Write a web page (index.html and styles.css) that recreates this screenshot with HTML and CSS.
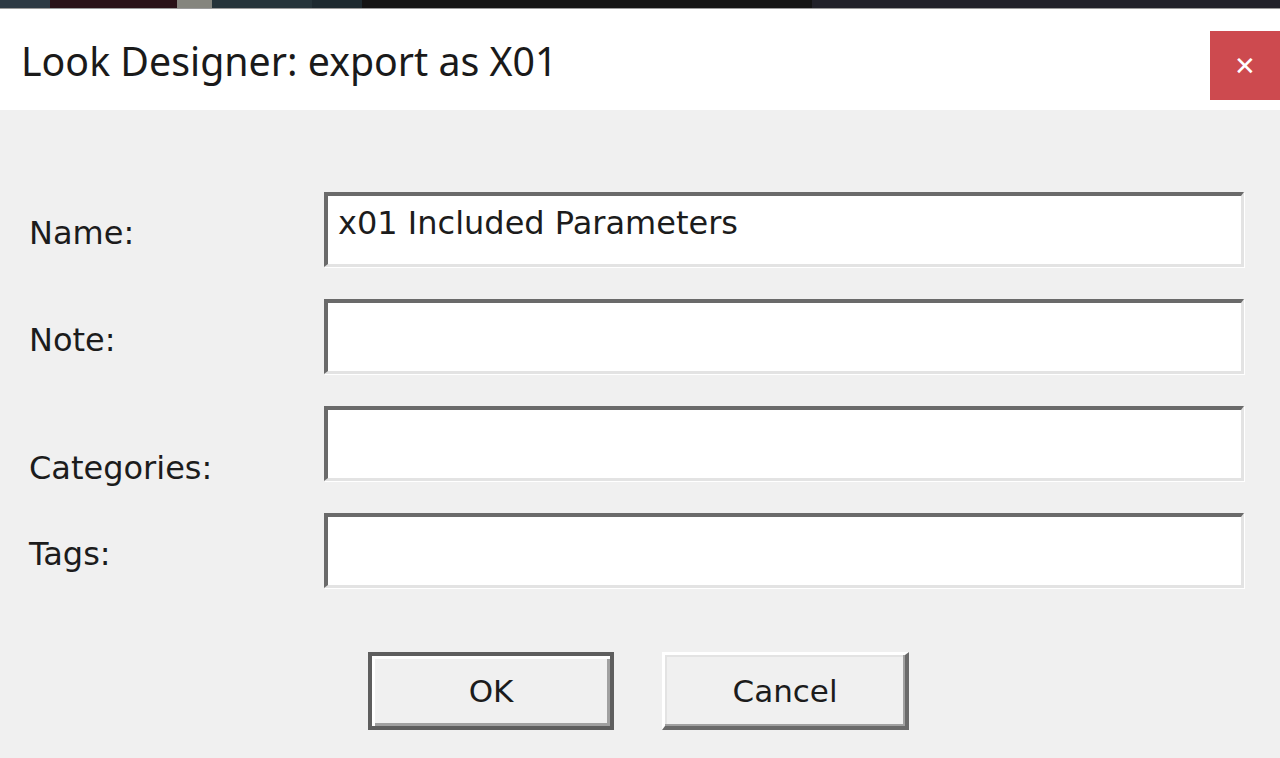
FILE: index.html
```html
<!DOCTYPE html>
<html>
<head>
<meta charset="utf-8">
<link rel="stylesheet" href="styles.css">
</head>
<body>
<div class="strip">
  <span class="seg s1"></span><span class="seg s2"></span><span class="seg s3"></span><span class="seg s4"></span><span class="seg s5"></span><span class="seg s6"></span><span class="seg s7"></span>
</div>
<div class="titlebar">
  <div class="title">Look Designer: export as X01</div>
  <div class="close">&#x2715;</div>
</div>
<div class="body">
  <div class="form">
    <div class="label">Name:</div>
    <div class="field">x01 Included Parameters</div>
    <div class="label">Note:</div>
    <div class="field"></div>
    <div class="label label-low">Categories:</div>
    <div class="field"></div>
    <div class="label">Tags:</div>
    <div class="field"></div>
  </div>
  <div class="buttons">
    <div class="btn btn-default"><span>OK</span></div>
    <div class="btn"><span>Cancel</span></div>
  </div>
</div>
</body>
</html>
```
FILE: styles.css
```css
* { box-sizing: border-box; }
html, body { margin: 0; padding: 0; }
body {
  width: 1280px;
  height: 758px;
  overflow: hidden;
  background: #f0f0f0;
  font-family: "DejaVu Sans", sans-serif;
  color: #1c1c1c;
}
.strip {
  display: flex;
  height: 9px;
  border-bottom: 1px solid #9a9a9a;
  background: #1f1f22;
}
.seg { display: block; height: 8px; }
.s1 { width: 50px; background: #2e3a44; }
.s2 { width: 127px; background: #2a1218; }
.s3 { width: 35px; background: #85857e; }
.s4 { width: 100px; background: #26343a; }
.s5 { width: 50px; background: #1e2a30; }
.s6 { width: 450px; background: #141414; }
.s7 { flex: 1; background: #22222a; }
.titlebar {
  height: 101px;
  background: #ffffff;
  display: flex;
  justify-content: space-between;
  align-items: flex-start;
}
.title {
  font-family: "Noto Sans", "Open Sans", sans-serif;
  font-size: 39.3px;
  color: #1a1a1a;
  padding-left: 21px;
  padding-top: 27px;
  line-height: 50px;
}
.close {
  margin-top: 22px;
  width: 70px;
  height: 69px;
  background: #cd4a4f;
  color: #ffffff;
  font-family: "DejaVu Sans", sans-serif;
  font-size: 26px;
  display: flex;
  align-items: center;
  justify-content: center;
}
.body {
  padding-top: 82px;
}
.form {
  display: grid;
  grid-template-columns: 324px 920px;
  row-gap: 32px;
}
.label {
  font-size: 32px;
  padding-left: 29px;
  align-self: center;
  padding-top: 6px;
}
.label-low { align-self: end; padding-top: 0; transform: translateY(6px); }
.field {
  height: 75px;
  background: #ffffff;
  border-top: 4px solid #6a6a6a;
  border-left: 4px solid #6a6a6a;
  border-right: 3px solid #e3e3e3;
  border-bottom: 3px solid #e3e3e3;
  box-shadow: 1px 1px 0 #ffffff;
  font-size: 32px;
  padding-left: 10px;
  padding-top: 7px;
  line-height: 40px;
}
.buttons {
  display: flex;
  gap: 48px;
  padding-left: 368px;
  padding-top: 64px;
}
.btn {
  width: 247px;
  height: 78px;
  background: #f0f0f0;
  border-top: 3px solid #ffffff;
  border-left: 3px solid #ffffff;
  border-right: 4px solid #6a6a6a;
  border-bottom: 4px solid #6a6a6a;
  box-shadow: inset -2px -2px 0 #a0a0a0, inset 2px 2px 0 #e3e3e3;
  display: flex;
  align-items: center;
  justify-content: center;
  font-size: 31px;
}
.btn-default {
  width: 246px;
  border: 4px solid #5e5e5e;
  box-shadow: inset 3px 3px 0 #ffffff, inset -3px -3px 0 #a0a0a0;
}
```
